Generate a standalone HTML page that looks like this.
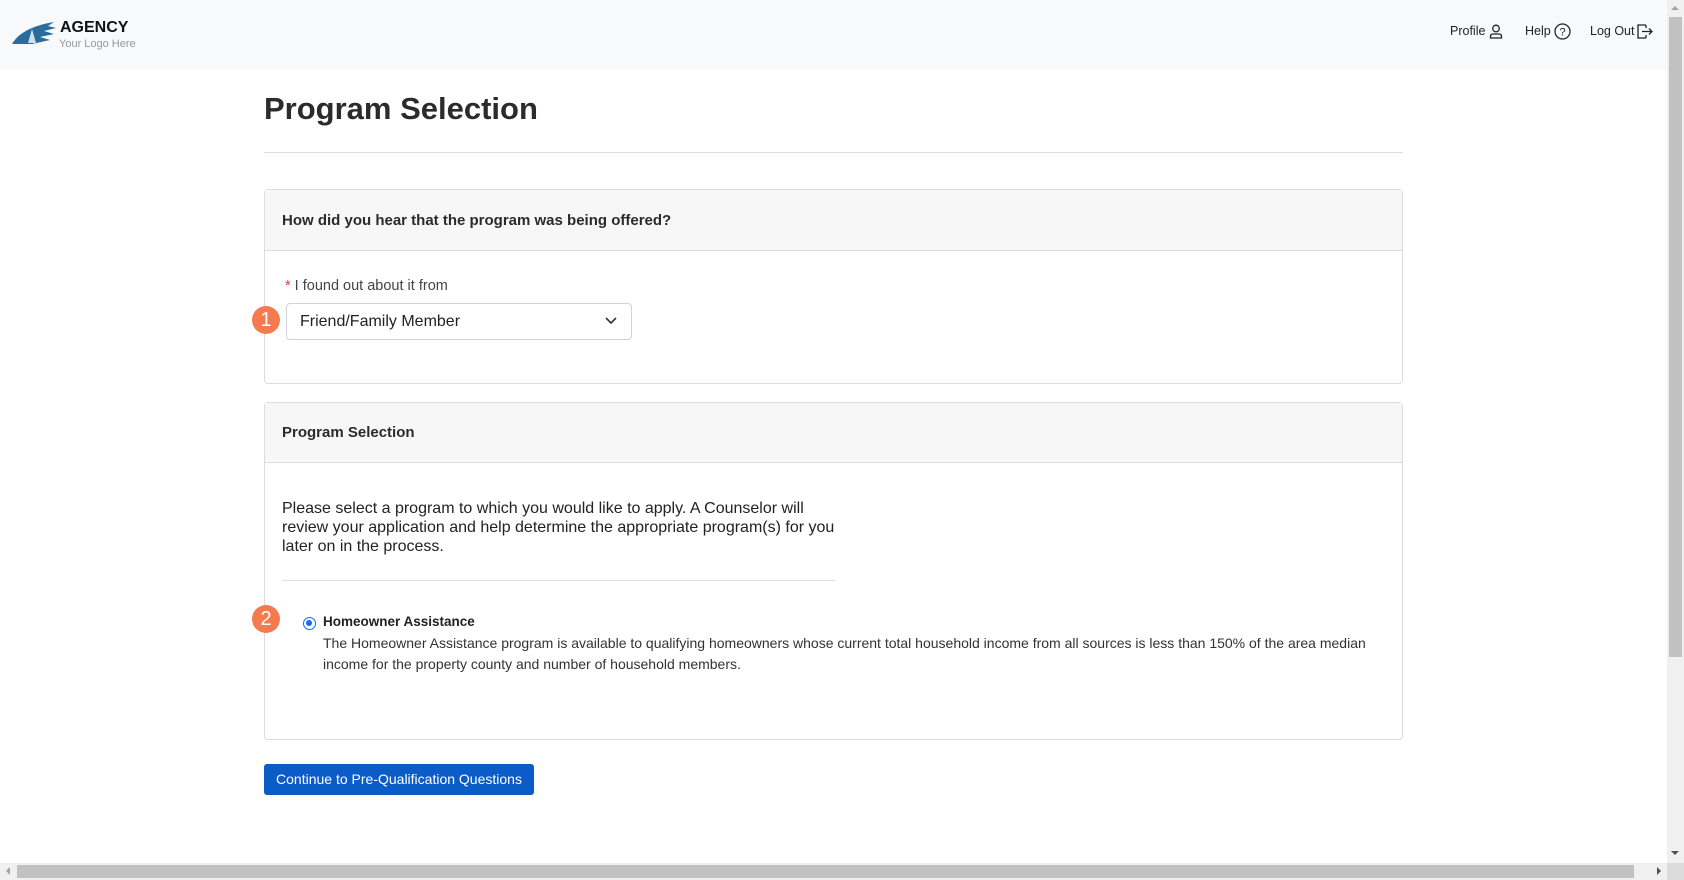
<!DOCTYPE html>
<html><head><meta charset="utf-8"><style>
*{box-sizing:border-box;margin:0;padding:0}
body{width:1684px;height:880px;overflow:hidden;background:#fff;font-family:"Liberation Sans",Arial,sans-serif;color:#212529;position:relative}
.hdr{position:absolute;left:0;top:0;width:1667px;height:70px;background:#f8f9fa}
.abs{position:absolute}
.card{position:absolute;left:264px;width:1139px;border:1px solid #dcdcdc;border-radius:4px;background:#fff}
.ch{background:#f7f7f7;border-bottom:1px solid #dcdcdc;font-size:15px;font-weight:bold;color:#2b2b2b;padding-left:17px}
.badge{position:absolute;width:28px;height:28px;border-radius:50%;background:#f47b4f;color:#fff;font-size:20px;text-align:center;line-height:28px}
</style></head><body>
<div class="hdr">
 <svg class="abs" style="left:10px;top:18px" width="46" height="30" viewBox="0 0 46 30"><path d="M2 26 C8 16 20 8 44 4 L38 8 L46 10 L34 13 L44 16 L30 19 L40 22 L22 26 Z" fill="#2a6c9e"/><path d="M18 25 L22 11 L26 25 Z" fill="#cfe0ee"/></svg>
 <div class="abs" style="left:60px;top:19px;font-size:16px;font-weight:bold;color:#111">AGENCY</div>
 <div class="abs" style="left:59px;top:38px;font-size:11px;color:#999">Your Logo Here</div>
 <div class="abs" style="left:1450px;top:24px;font-size:12.5px;color:#222">Profile</div>
 <svg class="abs" style="left:1489px;top:24px" width="14" height="15" viewBox="0 0 14 15"><circle cx="7" cy="4.5" r="3.3" fill="none" stroke="#222" stroke-width="1.3"/><path d="M1.5 14 V12.5 Q1.5 10 4 10 H10 Q12.5 10 12.5 12.5 V14 Z" fill="none" stroke="#222" stroke-width="1.3"/></svg>
 <div class="abs" style="left:1525px;top:24px;font-size:12.5px;color:#222">Help</div>
 <svg class="abs" style="left:1554px;top:23px" width="17" height="17" viewBox="0 0 17 17"><circle cx="8.5" cy="8.5" r="7.5" fill="none" stroke="#222" stroke-width="1.3"/><text x="8.5" y="12.5" font-size="11" text-anchor="middle" font-family="Liberation Sans" fill="#222">?</text></svg>
 <div class="abs" style="left:1590px;top:24px;font-size:12.5px;color:#222">Log Out</div>
 <svg class="abs" style="left:1637px;top:24px" width="17" height="15" viewBox="0 0 17 15"><path d="M9 1 H1 V14 H9 M9 1 V4 M9 14 V11" fill="none" stroke="#222" stroke-width="1.3"/><path d="M5 7.5 H15 M12 4.5 L15 7.5 L12 10.5" fill="none" stroke="#222" stroke-width="1.3"/></svg>
</div>
<div class="abs" style="left:264px;top:91px;font-size:31px;font-weight:bold;color:#2b2b2b">Program Selection</div>
<div class="abs" style="left:264px;top:152px;width:1139px;height:1px;background:#ddd"></div>

<div class="card" style="top:189px;height:195px">
 <div class="ch" style="height:61px;line-height:61px">How did you hear that the program was being offered?</div>
 <div class="abs" style="left:20px;top:88px;font-size:14.5px;color:#444"><span style="color:#e53935">*</span> I found out about it from</div>
 <div class="abs" style="left:21px;top:113px;width:346px;height:37px;border:1px solid #ced4da;border-radius:4px;font-size:16px;line-height:35px;padding-left:13px;color:#222">Friend/Family Member
  <svg class="abs" style="right:14px;top:13px" width="12" height="8" viewBox="0 0 12 8"><path d="M1 1 L6 6 L11 1" fill="none" stroke="#333" stroke-width="1.6"/></svg></div>
</div>
<div class="badge" style="left:252px;top:306px">1</div>

<div class="card" style="top:402px;height:338px">
 <div class="ch" style="height:60px;line-height:60px">Program Selection</div>
 <div class="abs" style="left:17px;top:96px;width:560px;font-size:16px;line-height:19px;color:#222">Please select a program to which you would like to apply. A Counselor will review your application and help determine the appropriate program(s) for you later on in the process.</div>
 <div class="abs" style="left:17px;top:177px;width:553px;height:1px;background:#ddd"></div>
 <div class="abs" style="left:38px;top:214px;width:13px;height:13px;border-radius:50%;border:1.5px solid #0d6efd;background:#fff"><div style="margin:2px;width:6px;height:6px;border-radius:50%;background:#0d6efd"></div></div>
 <div class="abs" style="left:58px;top:211px;font-size:13.5px;font-weight:bold;color:#222">Homeowner Assistance</div>
 <div class="abs" style="left:58px;top:230px;width:1070px;font-size:14px;line-height:21px;color:#333">The Homeowner Assistance program is available to qualifying homeowners whose current total household income from all sources is less than 150% of the area median income for the property county and number of household members.</div>
</div>
<div class="badge" style="left:252px;top:605px">2</div>

<div class="abs" style="left:264px;top:764px;width:270px;height:31px;background:#0b5cc6;border-radius:3px;color:#fff;font-size:14px;text-align:center;line-height:31px">Continue to Pre-Qualification Questions</div>

<div class="abs" style="left:1667px;top:0;width:17px;height:880px;background:#f0f0f0"></div>
<div class="abs" style="left:1669px;top:17px;width:13px;height:640px;background:#c1c1c1"></div>
<div class="abs" style="left:1671px;top:6px;width:0;height:0;border-left:4px solid transparent;border-right:4px solid transparent;border-bottom:4px solid #a3a3a3"></div>
<div class="abs" style="left:1671px;top:851px;width:0;height:0;border-left:4px solid transparent;border-right:4px solid transparent;border-top:4px solid #505050"></div>
<div class="abs" style="left:0;top:863px;width:1667px;height:17px;background:#f0f0f0"></div>
<div class="abs" style="left:17px;top:865px;width:1617px;height:13px;background:#c1c1c1"></div>
<div class="abs" style="left:1667px;top:863px;width:17px;height:17px;background:#dcdcdc"></div>
<div class="abs" style="left:1657px;top:867px;width:0;height:0;border-top:4px solid transparent;border-bottom:4px solid transparent;border-left:4px solid #505050"></div>
<div class="abs" style="left:6px;top:867px;width:0;height:0;border-top:4px solid transparent;border-bottom:4px solid transparent;border-right:4px solid #a3a3a3"></div>
</body></html>
